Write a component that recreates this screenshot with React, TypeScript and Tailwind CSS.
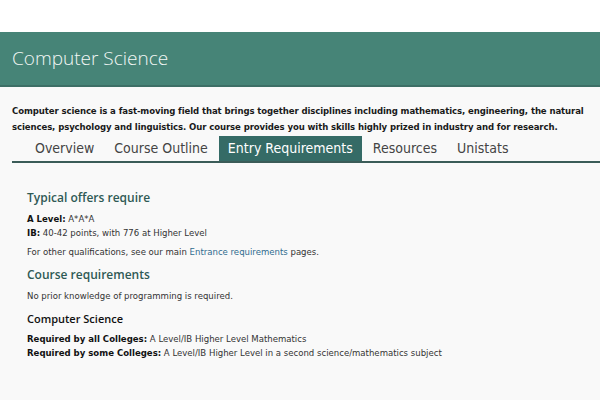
export default function App() {
  const tabs = ['Overview', 'Course Outline', 'Entry Requirements', 'Resources', 'Unistats'];
  const active = 'Entry Requirements';
  const body = { fontFamily: '"DejaVu Sans Condensed", "DejaVu Sans", Verdana, sans-serif' };
  const head = { fontFamily: '"Open Sans", "Noto Sans", sans-serif' };

  return (
    <div className="h-[400px] w-[600px] overflow-hidden bg-white">
      <div className="h-8 bg-white" />
      <div className="flex h-[55px] items-center border-b-2 border-[#3d6f66] bg-[#468477] px-3">
        <h1 className="text-[19px] font-light text-[#f2f7f5]" style={head}>
          Computer Science
        </h1>
      </div>
      <div className="bg-[#f9f9f9] pt-[16px]">
        <p
          className="whitespace-nowrap pl-3 text-[9.5px] font-bold leading-[16px] tracking-[-0.1px] text-[#1a1a1a]"
          style={body}
        >
          Computer science is a fast-moving field that brings together disciplines including mathematics, engineering, the natural
          <br />
          sciences, psychology and linguistics. Our course provides you with skills highly prized in industry and for research.
        </p>
        <nav className="ml-3 mt-[1px] flex border-b-2 border-[#3b5c58] pl-[14px]" style={body}>
          {tabs.map((t) => (
            <span
              key={t}
              className={
                t === active
                  ? 'mr-[2px] bg-[#356b66] px-[9px] pb-[3px] pt-[3px] text-[14px] leading-[19px] text-white'
                  : 'mr-[2px] px-[9px] pb-[3px] pt-[3px] text-[14px] leading-[19px] text-[#444]'
              }
            >
              {t}
            </span>
          ))}
        </nav>
        <div className="px-[27px] pt-[27px] pb-[40px] text-[9.5px] text-[#333]" style={body}>
          <h2 className="text-[12px] font-semibold leading-[16px] text-[#2f5a55]" style={head}>
            Typical offers require
          </h2>
          <div className="mt-[6px] leading-[14px]">
            <div>
              <b className="text-[#111]">A Level:</b> A*A*A
            </div>
            <div>
              <b className="text-[#111]">IB:</b> 40-42 points, with 776 at Higher Level
            </div>
          </div>
          <p className="mt-[5px] leading-[14px]">
            For other qualifications, see our main{' '}
            <span className="text-[#2f6c8f]">Entrance requirements</span> pages.
          </p>
          <h2 className="mt-[8px] text-[12px] font-semibold leading-[16px] text-[#2f5a55]" style={head}>
            Course requirements
          </h2>
          <p className="mt-[6px] leading-[14px]">No prior knowledge of programming is required.</p>
          <h3 className="mt-[8px] text-[11px] font-semibold leading-[16px] text-[#111]" style={head}>
            Computer Science
          </h3>
          <div className="mt-[5px] leading-[14px]">
            <div>
              <b className="text-[#111]">Required by all Colleges:</b> A Level/IB Higher Level Mathematics
            </div>
            <div>
              <b className="text-[#111]">Required by some Colleges:</b> A Level/IB Higher Level in a second science/mathematics subject
            </div>
          </div>
        </div>
      </div>
    </div>
  );
}
